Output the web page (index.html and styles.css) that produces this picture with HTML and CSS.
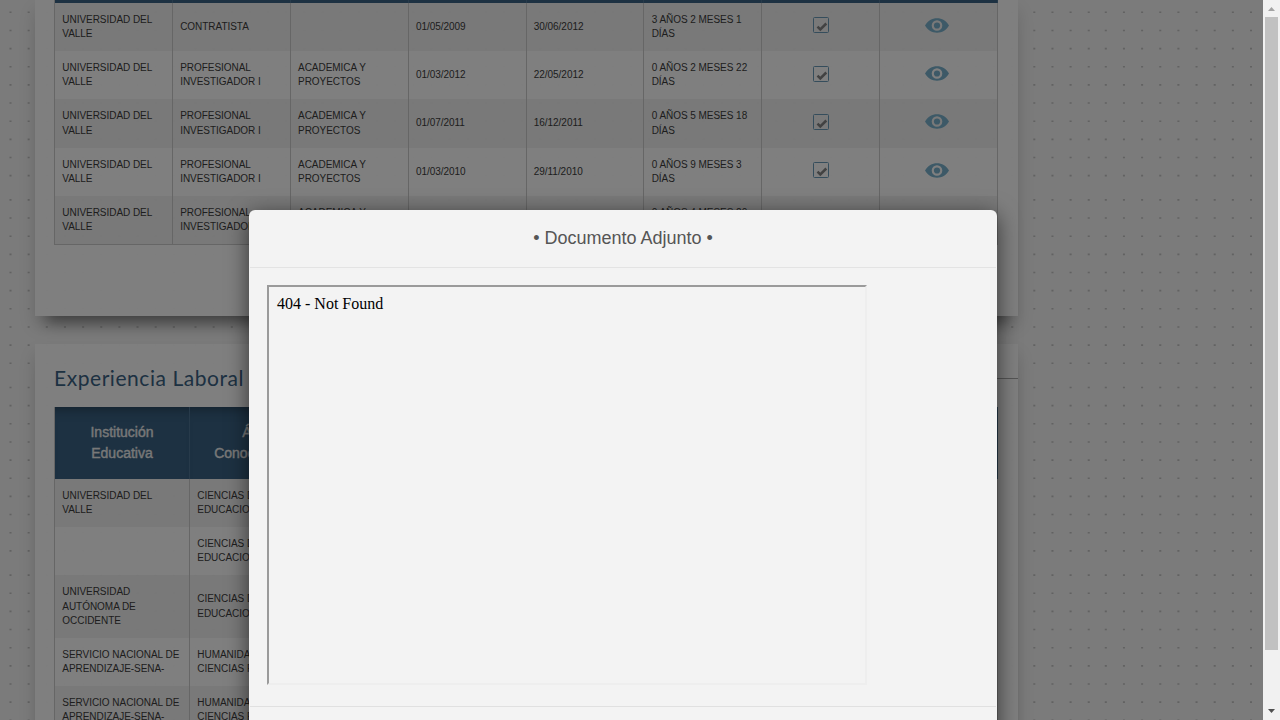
FILE: index.html
```html
<!DOCTYPE html>
<html lang="es">
<head>
<meta charset="utf-8">
<title>Documento Adjunto</title>
<link rel="stylesheet" href="styles.css">
</head>
<body>
<svg width="0" height="0" class="defs">
  <symbol id="eye" viewBox="0 0 24 15"><path fill-rule="evenodd" d="M0 7.5C3 2.5 7 .3 12 .3S21 2.5 24 7.5C21 12.500 17 14.700 12 14.700S3 12.500 0 7.500ZM12 2.200A5.300 5.300 0 1 0 12 12.800A5.300 5.300 0 1 0 12 2.200Z"/><circle cx="12" cy="7.500" r="3.100"/></symbol>
  <symbol id="check" viewBox="0 0 16 16"><rect class="box" x=".5" y=".5" width="15" height="15" rx="1"/><path class="tick" d="M4.500 9.700L7.300 12.500L13.300 6.500"/></symbol>
</svg>
<div class="app">
  <div class="page">
    <svg class="dots" width="1263" height="720"></svg>
    <main class="content">
      <section class="panel first">
        <table class="grid work">
          <thead><tr><th></th><th></th><th></th><th></th><th></th><th></th><th></th><th></th></tr></thead>
          <tbody>
            <tr><td>UNIVERSIDAD DEL VALLE</td><td>CONTRATISTA</td><td></td><td>01/05/2009</td><td>30/06/2012</td><td>3 AÑOS 2 MESES 1 DÍAS</td><td class="icon"><svg class="check"><use href="#check"/></svg></td><td class="icon"><svg class="eye"><use href="#eye"/></svg></td></tr>
            <tr><td>UNIVERSIDAD DEL VALLE</td><td>PROFESIONAL INVESTIGADOR I</td><td>ACADEMICA Y PROYECTOS</td><td>01/03/2012</td><td>22/05/2012</td><td>0 AÑOS 2 MESES 22 DÍAS</td><td class="icon"><svg class="check"><use href="#check"/></svg></td><td class="icon"><svg class="eye"><use href="#eye"/></svg></td></tr>
            <tr><td>UNIVERSIDAD DEL VALLE</td><td>PROFESIONAL INVESTIGADOR I</td><td>ACADEMICA Y PROYECTOS</td><td>01/07/2011</td><td>16/12/2011</td><td>0 AÑOS 5 MESES 18 DÍAS</td><td class="icon"><svg class="check"><use href="#check"/></svg></td><td class="icon"><svg class="eye"><use href="#eye"/></svg></td></tr>
            <tr><td>UNIVERSIDAD DEL VALLE</td><td>PROFESIONAL INVESTIGADOR I</td><td>ACADEMICA Y PROYECTOS</td><td>01/03/2010</td><td>29/11/2010</td><td>0 AÑOS 9 MESES 3 DÍAS</td><td class="icon"><svg class="check"><use href="#check"/></svg></td><td class="icon"><svg class="eye"><use href="#eye"/></svg></td></tr>
            <tr><td>UNIVERSIDAD DEL VALLE</td><td>PROFESIONAL INVESTIGADOR I</td><td>ACADEMICA Y PROYECTOS</td><td></td><td></td><td>0 AÑOS 4 MESES 20 DÍAS</td><td></td><td></td></tr>
          </tbody>
        </table>
      </section>
      <section class="panel second">
        <h2 class="heading"><span>Experiencia Laboral</span></h2>
        <table class="grid teaching">
          <thead><tr><th>Institución<br>Educativa</th><th>Área<br>Conocimiento</th><th></th></tr></thead>
          <tbody>
            <tr><td>UNIVERSIDAD DEL<br>VALLE</td><td>CIENCIAS DE LA<br>EDUCACION</td><td></td></tr>
            <tr><td></td><td>CIENCIAS DE LA<br>EDUCACION</td><td></td></tr>
            <tr class="tall"><td>UNIVERSIDAD<br>AUTÓNOMA DE<br>OCCIDENTE</td><td>CIENCIAS DE LA<br>EDUCACION</td><td></td></tr>
            <tr><td>SERVICIO NACIONAL DE<br>APRENDIZAJE-SENA-</td><td>HUMANIDADES Y<br>CIENCIAS RELIG.</td><td></td></tr>
            <tr><td>SERVICIO NACIONAL DE<br>APRENDIZAJE-SENA-</td><td>HUMANIDADES Y<br>CIENCIAS RELIG.</td><td></td></tr>
          </tbody>
        </table>
      </section>
    </main>
    <div class="backdrop">
      <div class="modal">
        <div class="modal-header">• Documento Adjunto •</div>
        <div class="modal-body"><div class="frame">404 - Not Found</div></div>
        <div class="modal-footer"></div>
      </div>
    </div>
  </div>
  <div class="scrollbar">
    <svg class="arrow up" viewBox="0 0 17 17"><path d="M5 11L8.500 7L12 11Z"/></svg>
    <div class="thumb"></div>
    <svg class="arrow down" viewBox="0 0 17 17"><path d="M5 6L8.500 10L12 6Z"/></svg>
  </div>
</div>
<script src="dots.js"></script>
</body>
</html>
```

FILE: styles.css
```css
* { box-sizing: border-box; }
body { margin: 0; overflow: hidden; font-family: "Liberation Sans", Arial, sans-serif; }
.defs { position: absolute; }
.app { display: flex; width: 1280px; height: 720px; overflow: hidden; }
.page { position: relative; width: 1263px; height: 720px; overflow: hidden; background: #f6f6f6; }
.dots { position: absolute; inset: 0; fill: #888; }
.content { position: relative; width: 983px; margin-left: 35px; display: flex; flex-direction: column; gap: 28px; }
.panel { background: rgba(255, 255, 255, .96); padding: 0 20px 0 19px; box-shadow: 0 18px 14px -12px rgba(0, 0, 0, .42), 0 10px 16px rgba(0, 0, 0, .14); }
.first { height: 316px; }
.second { height: 450px; padding-top: 18px; }

.grid { width: 944px; table-layout: fixed; border-collapse: separate; border-spacing: 0; border-left: 1px solid #ccc; border-bottom: 1px solid #ccc; }
.grid td { height: 48.240px; padding: 0 7px 0 7.300px; font-size: 10px; letter-spacing: -.04px; line-height: 14.286px; color: #3c3c3c; border-right: 1px solid #ccc; vertical-align: middle; }
.grid .tall td { height: 62.500px; }
.grid tbody tr:nth-child(odd) { background: rgba(0, 0, 0, .05); }
.grid th { background: #3a6284; border-right: 1px solid #4f7494; padding: 0; }
.work th { height: 3px; }
.teaching th { height: 72px; font-size: 14px; line-height: 21px; font-weight: 400; color: #f0f0f0; -webkit-text-stroke: .35px #f0f0f0; }
.teaching th:nth-child(1), .teaching th:nth-child(2) { width: 135px; }
.teaching thead th { box-shadow: inset 0 12px 12px -10px rgba(0, 0, 0, .35); }
.grid td.icon { text-align: center; }
.icon svg { display: block; margin: -3.600px auto 0; }
.check { width: 16px; height: 16px; }
.box { fill: none; stroke: #6a9ab8; }
.tick { fill: none; stroke: #858585; stroke-width: 2.500; }
.icon .eye { width: 24px; height: 15px; fill: #7ab3ce; transform: translateX(-2px); }

.heading { display: flex; align-items: center; height: 31px; margin: 0 -20px 14px 0; font: 400 21px/31px Lato, sans-serif; color: #3a6284; }
.heading span { letter-spacing: .55px; white-space: nowrap; }
.heading::after { content: ""; flex: 1; height: 1px; margin: 1px 0 0 14px; background: #aaa; }

.backdrop { position: absolute; inset: 0; background: rgba(0, 0, 0, .5); }
.modal { width: 748px; height: 560px; margin: 210px 0 0 249px; padding: 0 1px; background: #f3f3f3; border-radius: 6px; box-shadow: 0 5px 22px rgba(0, 0, 0, .6); }
.modal-header { height: 58px; border-bottom: 1px solid #e3e3e3; text-align: center; font-size: 18px; line-height: 56px; color: #555; }
.modal-body { height: 438px; padding: 17px; }
.frame { width: 600px; height: 400px; border: 2px solid; border-color: #9a9a9a #eee #eee #9a9a9a; padding: 8px; font: 16px/18px "Liberation Serif", "Times New Roman", serif; color: #000; }
.modal-footer { border-top: 1px solid #e0e0e0; }

.scrollbar { display: flex; flex-direction: column; align-items: center; width: 17px; height: 720px; background: #f1f1f1; }
.arrow { width: 17px; height: 17px; flex: none; }
.up { fill: #a3a3a3; }
.down { margin-top: auto; fill: #505050; }
.thumb { width: 13px; height: 633px; background: #c1c1c1; }
```

FILE: dots.js
```js
const svg = document.querySelector('.dots');
const columns = [];
for (let i = 0; i < 10; i++) columns.push(10.5 + i * 18.15);
for (let x = 195.5; x < 1030; x += 18.15) columns.push(x);
for (let i = 0; i < 4; i++) columns.push(1034.3 + i * 18.15);
for (let i = 0; i < 9; i++) columns.push(1105.8 + i * 18.15);
let path = '';
for (let top = 11.5; top < 720; top += 187.6) {
  for (let row = 0; row < 10; row++) {
    for (const x of columns) {
      path += `M${x - 1} ${top + row * 18.15}h2v1.600h-2z`;
    }
  }
}
const dots = document.createElementNS('http://www.w3.org/2000/svg', 'path');
dots.setAttribute('d', path);
dots.setAttribute('opacity', '.45');
svg.appendChild(dots);
```
